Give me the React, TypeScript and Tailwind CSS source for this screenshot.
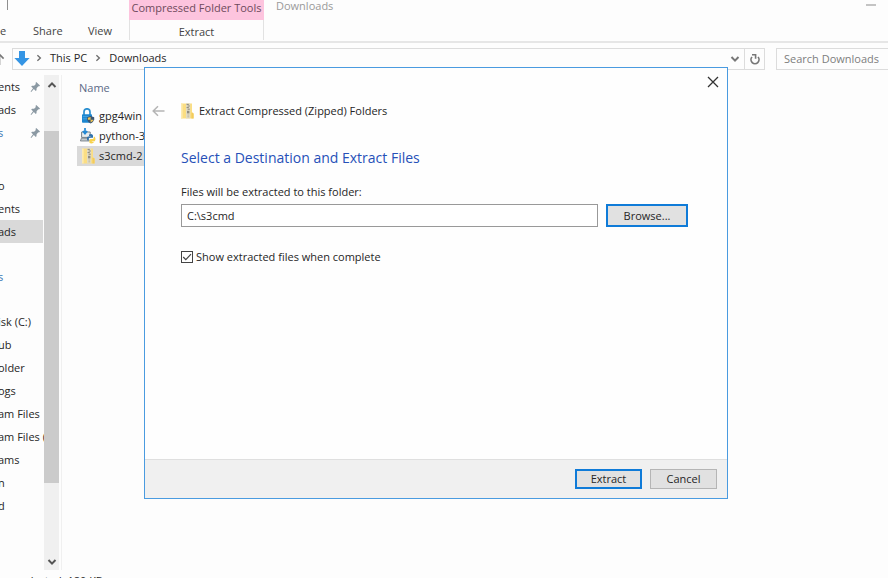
import { useState } from 'react';

type NavItem = { label: string; pinned?: boolean; active?: boolean; blue?: boolean };

const quickAccess: NavItem[] = [
  { label: 'ents', pinned: true },
  { label: 'ads', pinned: true },
  { label: 's', pinned: true, blue: true },
];

const thisPc: NavItem[] = [
  { label: 'o' },
  { label: 'ents' },
  { label: 'ads', active: true },
];

const drive: NavItem[] = [
  { label: 'isk (C:)' },
  { label: 'ub' },
  { label: 'older' },
  { label: 'ogs' },
  { label: 'am Files' },
  { label: 'am Files (' },
  { label: 'ams' },
  { label: 'n' },
  { label: 'd' },
];

function PinIcon() {
  return (
    <svg width="11" height="12" viewBox="0 0 11 12" className="shrink-0">
      <path d="M6.2 1 L10 4.6 L9 5.4 L8.3 5.2 L6.6 7.2 L6.5 9.2 L5.7 9.9 L3.9 8.1 L1.2 10.9 L0.6 10.4 L3 7.3 L1.2 5.4 L2 4.7 L4.1 4.7 L5.9 2.9 L5.5 1.9 Z" fill="#8b99a3" />
    </svg>
  );
}

// Chevron used by the scrollbar and the address bar
function Chevron({ className }: { className?: string }) {
  return (
    <svg width="10" height="8" viewBox="0 0 10 8" className={className}>
      <path d="M1.5 2 L5 5.6 L8.5 2" fill="none" stroke="currentColor" strokeWidth="2" />
    </svg>
  );
}

function CrumbArrow() {
  return (
    <svg width="6" height="8" viewBox="0 0 6 8">
      <path d="M1.4 1.2 L4.4 4 L1.4 6.8" fill="none" stroke="#6b6b6b" strokeWidth="1.3" />
    </svg>
  );
}

function ZipIcon() {
  return (
    <svg width="13" height="16" viewBox="0 0 13 16" className="shrink-0">
      <path d="M0 0.4 H11 V9 L12.6 10.4 V15.4 H0 Z" fill="#fbde83" />
      <path d="M0 0.4 H1.6 V15.4 H0 Z" fill="#fdebb0" />
      <path d="M10.4 9.4 L12.6 10.4 V15.4 H10.4 Z" fill="#f3cb5c" />
      <rect x="5" y="0.4" width="4.2" height="15" fill="#e2dcc4" />
      <path d="M5.6 1.4 H7.8 M6.6 3 H8.8 M5.6 4.6 H7.8 M6.6 6.2 H8.8" stroke="#8a867b" strokeWidth="1" />
      <path d="M6 7.8 H8.4 V10.4 H6 Z" fill="#918d82" />
      <path d="M6.4 12 H8.2 M6.4 13.8 H8.2" stroke="#b5b09e" strokeWidth="0.8" />
    </svg>
  );
}

function LockIcon() {
  return (
    <svg width="14" height="16" viewBox="0 0 14 16" className="shrink-0">
      <path d="M3 7 V4 A3 3.2 0 0 1 9 4 V7" fill="none" stroke="#2b8fd0" strokeWidth="1.7" />
      <rect x="1" y="6.2" width="10" height="8.6" rx="0.8" fill="#1c86cf" />
      <path d="M1.8 8.6 H7.6 M1.8 10.8 H6.6" stroke="#4fa9e2" strokeWidth="0.8" />
      <path d="M9.6 8 L13.2 9.2 V11.6 Q12.8 14 9.6 15.4 Q6.4 14 6.1 11.6 V9.2 Z" fill="#3b5573" />
      <path d="M9.6 8.9 V11.8 H6.9 V9.8 Z M9.6 11.8 H12.5 Q12 13.6 9.6 14.6 Z" fill="#f0c552" />
    </svg>
  );
}

function PythonInstallerIcon() {
  return (
    <svg width="16" height="16" viewBox="0 0 16 16" className="shrink-0">
      <path d="M1.6 4 H10.2 V9.4 H1.6 Z" fill="#e6ecef" stroke="#77818a" strokeWidth="1" />
      <path d="M1.4 10.2 H8 L9.4 13 H0.4 Z" fill="#c2c8cc" stroke="#6f7880" strokeWidth="0.8" />
      <path d="M5 0 V4.6 M2.8 3 L5 5.6 L7.2 3" fill="none" stroke="#2489d4" strokeWidth="1.7" />
      <path d="M9 6.4 Q12.4 5 13 7.4 V9.8 H9.4 Q8.6 10 8.4 12.4 H7.4 Q6 9.4 8.2 8.6 H11 V8 H9 Z" fill="#2f72ad" />
      <path d="M13.8 8.8 H14.8 Q16.2 11.2 14.8 13.2 H11.8 V13.8 H13.6 V14.8 Q11.2 16.2 9.4 14.8 V12.2 Q9.6 11 11 11 H13 Q13.8 10.6 13.8 8.8 Z" fill="#f7d24c" />
    </svg>
  );
}

const files = [
  { name: 'gpg4win', icon: <LockIcon /> },
  { name: 'python-3', icon: <PythonInstallerIcon /> },
  { name: 's3cmd-2', icon: <ZipIcon />, selected: true },
];

function NavRows({ items }: { items: NavItem[] }) {
  return (
    <ul>
      {items.map((item, i) => (
        <li
          key={i}
          className={`flex h-[23px] w-[43px] items-center justify-between pr-0.5 ${item.active ? 'bg-[#d9d9d9]' : ''}`}
        >
          <span className={`-ml-0.5 whitespace-nowrap ${item.blue ? 'text-[#3b78b5]' : ''}`}>{item.label}</span>
          {item.pinned && <PinIcon />}
        </li>
      ))}
    </ul>
  );
}

function Ribbon() {
  return (
    <header className="flex h-[43px] shrink-0 border-b-2 border-[#e6e6e6]">
      <div className="flex w-[129px] flex-col justify-between">
        <div className="ml-[7px] h-[10px] w-px bg-[#8f8f8f]" />
        <nav className="flex h-5 items-center">
          <button className="w-[33px] text-left text-[#444]">e</button>
          <button className="w-[55px] text-left text-[#444]">Share</button>
          <button className="text-[#444]">View</button>
        </nav>
      </div>
      <div className="flex w-[135px] flex-col">
        <div className="flex h-5 items-center justify-center whitespace-nowrap bg-[#fdc4de] pb-1 text-[#6e4a5c]">
          Compressed Folder Tools
        </div>
        <button className="mb-1 flex-1 border-x border-[#e2e2e2] pt-1 text-[#444]">Extract</button>
      </div>
      <div className="flex flex-1 items-start justify-between pl-3 pr-3">
        <span className="leading-3 text-[#9a9a9a]">Downloads</span>
        <button aria-label="Minimize" className="mt-1 h-0.5 w-[10px] bg-[#c4c4c4]" />
      </div>
    </header>
  );
}

function AddressBar() {
  return (
    <div className="flex h-[22px] shrink-0 items-stretch">
      <button aria-label="Up" className="w-3 text-[#777]">
        <svg width="12" height="14" viewBox="0 0 12 14">
          <path d="M-0.5 2 V13 M-4 6 L-0.5 2.4 L3.6 6.6" fill="none" stroke="currentColor" strokeWidth="1.6" />
        </svg>
      </button>
      <div className="flex flex-1 items-center border border-[#dcdcdc]">
        <svg width="16" height="17" viewBox="0 0 16 17" className="mb-0.5 ml-px">
          <path d="M5 1 H11 V8 H15.6 L8 16 L0.4 8 H5 Z" fill="#3595e4" />
        </svg>
        <div className="flex flex-1 items-center gap-2 pb-0.5 pl-1.5">
          <CrumbArrow />
          <span>This PC</span>
          <CrumbArrow />
          <span>Downloads</span>
        </div>
        <button aria-label="Previous locations" className="mr-1 text-[#777]">
          <Chevron />
        </button>
        <button aria-label="Refresh" className="flex h-full w-5 items-center justify-center border-l border-[#dcdcdc] text-[#777]">
          <svg width="12" height="13" viewBox="0 0 12 13">
            <path d="M3 4 A4 4 0 1 0 9 4" fill="none" stroke="currentColor" strokeWidth="1.7" />
            <path d="M3 1.8 H6.6 V5.8" fill="none" stroke="currentColor" strokeWidth="1.6" />
          </svg>
        </button>
      </div>
      <input
        type="text"
        aria-label="Search Downloads"
        placeholder="Search Downloads"
        className="-mr-px ml-[11px] w-[113px] border border-[#dcdcdc] px-[7px] outline-none placeholder:text-[#7d7d7d]"
      />
    </div>
  );
}

function ExtractDialog() {
  const [folder, setFolder] = useState('C:\\s3cmd');
  const [showFiles, setShowFiles] = useState(true);

  return (
    <div
      role="dialog"
      aria-labelledby="wizard-title"
      className="absolute bottom-[79px] left-[144px] right-[160px] top-[67px] flex flex-col border border-[#4a9be0] bg-[#fefefe]"
    >
      <div className="flex h-7 shrink-0 items-center justify-end pr-2">
        <button aria-label="Close" className="text-[#333]">
          <svg width="12" height="12" viewBox="0 0 12 12">
            <path d="M1 1 L11 11 M11 1 L1 11" stroke="currentColor" strokeWidth="1.3" />
          </svg>
        </button>
      </div>

      <div className="flex h-[30px] shrink-0 items-center pl-[7px]">
        <button aria-label="Back" className="text-[#b5b5b5]">
          <svg width="13" height="12" viewBox="0 0 13 12">
            <path d="M12.5 6 H1.5 M6 1.2 L1.2 6 L6 10.8" fill="none" stroke="currentColor" strokeWidth="1.5" />
          </svg>
        </button>
        <div className="ml-4 flex items-center gap-[5px]">
          <ZipIcon />
          <span id="wizard-title">Extract Compressed (Zipped) Folders</span>
        </div>
      </div>

      <div className="flex flex-1 flex-col pl-9 pr-[39px] pt-[22px]">
        <h1 className="text-[14px] leading-5 text-[#2650b8]">Select a Destination and Extract Files</h1>
        <label htmlFor="folder" className="mt-4">
          Files will be extracted to this folder:
        </label>
        <div className="mt-1 flex h-[23px] gap-2">
          <input
            id="folder"
            type="text"
            value={folder}
            onChange={(e) => setFolder(e.target.value)}
            className="min-w-0 flex-1 border border-[#999] bg-white px-[5px] outline-none"
          />
          <button className="w-[82px] border-2 border-[#0f7bd8] bg-[#e1e1e1]">Browse...</button>
        </div>
        <label className="mt-[22px] flex items-center gap-[3px]">
          <span className="relative flex">
            <input
              type="checkbox"
              checked={showFiles}
              onChange={(e) => setShowFiles(e.target.checked)}
              className="h-3 w-3 appearance-none border border-[#444] bg-white"
            />
            {showFiles && (
              <svg width="12" height="12" viewBox="0 0 12 12" className="pointer-events-none absolute inset-0">
                <path d="M2.2 6 L4.8 8.6 L10 3.2" fill="none" stroke="#444" strokeWidth="1.2" />
              </svg>
            )}
          </span>
          Show extracted files when complete
        </label>
      </div>

      <div className="flex h-[39px] shrink-0 items-center justify-end gap-2 border-t border-[#dfdfdf] bg-[#f0f0f0] pr-[10px]">
        <button className="h-5 w-[67px] border-2 border-[#0f7bd8] bg-[#e1e1e1]">Extract</button>
        <button className="h-5 w-[67px] border border-[#b5b5b5] bg-[#e1e1e1]">Cancel</button>
      </div>
    </div>
  );
}

export default function App() {
  return (
    <div className="relative flex h-screen flex-col overflow-hidden bg-[#fdfdfd] font-['Open_Sans','Noto_Sans',sans-serif] text-[11px] leading-4 text-[#262626]">
      <Ribbon />
      <div className="h-[5px] shrink-0" />
      <AddressBar />

      <main className="mt-[5px] flex min-h-0 flex-1">
        <aside className="w-11 shrink-0">
          <NavRows items={quickAccess} />
          <div className="h-[30px]" />
          <NavRows items={thisPc} />
          <div className="h-[22px]" />
          <NavRows items={[{ label: 's', blue: true }]} />
          <div className="h-[22px]" />
          <NavRows items={drive} />
        </aside>

        <div className="flex w-[15px] shrink-0 flex-col items-center bg-[#f0f0f0] text-[#555]">
          <button aria-label="Scroll up" className="flex h-14 items-start pt-1.5">
            <Chevron className="rotate-180" />
          </button>
          <div className="h-[352px] w-full bg-[#cbcbcb]" />
          <div className="flex-1" />
          <button aria-label="Scroll down" className="pb-1">
            <Chevron />
          </button>
        </div>

        <section className="ml-0.5 flex-1 border-l border-[#f0f0f0] pl-[15px]">
          <div className="pl-0.5 pt-[5px] text-[#5b6a86]">Name</div>
          <ul className="mt-[10px]">
            {files.map((file) => (
              <li
                key={file.name}
                className={`flex h-5 w-48 items-center ${file.selected ? 'bg-[#d9d9d9]' : ''}`}
              >
                <span className="flex w-[22px] justify-center">{file.icon}</span>
                {file.name}
              </li>
            ))}
          </ul>
        </section>
      </main>

      <footer className="h-2 shrink-0 overflow-hidden">
        <div className="whitespace-pre pt-[3px]">em selected  180 KB</div>
      </footer>

      <ExtractDialog />
    </div>
  );
}
